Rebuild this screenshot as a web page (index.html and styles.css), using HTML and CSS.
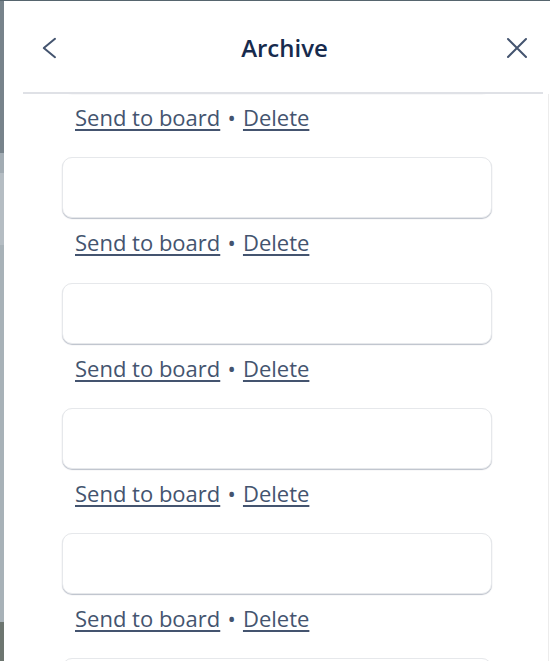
FILE: index.html
```html
<!DOCTYPE html>
<html lang="en">
<head>
<meta charset="utf-8">
<title>Archive</title>
<link rel="stylesheet" href="styles.css">
</head>
<body>
<div class="backdrop"></div>
<div class="panel">
  <header class="header">
    <button class="icon-btn back" aria-label="Back">
      <svg width="16" height="22" viewBox="0 0 16 22" fill="none" stroke="currentColor" stroke-width="2" stroke-linecap="round" stroke-linejoin="round"><path d="M14 1.8 L2.8 11 L14 20.2"/></svg>
    </button>
    <h2 class="title">Archive</h2>
    <button class="icon-btn close" aria-label="Close">
      <svg width="22" height="22" viewBox="0 0 22 22" fill="none" stroke="currentColor" stroke-width="2" stroke-linecap="round"><path d="M2 2 L20 20 M20 2 L2 20"/></svg>
    </button>
  </header>
  <div class="scroller">
    <ul class="list">
      <li class="item">
        <div class="card"></div>
        <div class="actions"><a href="#">Send to board</a><span class="sep"> • </span><a href="#">Delete</a></div>
      </li>
      <li class="item">
        <div class="card"></div>
        <div class="actions"><a href="#">Send to board</a><span class="sep"> • </span><a href="#">Delete</a></div>
      </li>
      <li class="item">
        <div class="card"></div>
        <div class="actions"><a href="#">Send to board</a><span class="sep"> • </span><a href="#">Delete</a></div>
      </li>
      <li class="item">
        <div class="card"></div>
        <div class="actions"><a href="#">Send to board</a><span class="sep"> • </span><a href="#">Delete</a></div>
      </li>
      <li class="item">
        <div class="card"></div>
        <div class="actions"><a href="#">Send to board</a><span class="sep"> • </span><a href="#">Delete</a></div>
      </li>
      <li class="item">
        <div class="card"></div>
      </li>
    </ul>
  </div>
</div>
</body>
</html>
```
FILE: styles.css
```css
html, body {
  margin: 0;
  padding: 0;
  height: 661px;
  overflow: hidden;
}

body {
  display: flex;
  background: #56656e;
  font-family: "Open Sans", "Noto Sans", sans-serif;
}

.backdrop {
  width: 4px;
  flex: none;
  background: linear-gradient(to bottom,
    #56656e 0 1px,
    #77838b 1px 153px,
    #a2acb3 153px 173px,
    #b5bdc3 173px 245px,
    #a8b2b8 245px 622px,
    #6d7670 622px 661px);
}

.panel {
  flex: 1;
  margin-top: 1px;
  background: #ffffff;
  display: flex;
  flex-direction: column;
  min-width: 0;
}

.header {
  flex: none;
  box-sizing: border-box;
  margin: 0 7px 0 19px;
  height: 93px;
  padding: 2px 15px 0 18px;
  border-bottom: 2px solid #dfe1e6;
  display: grid;
  grid-template-columns: 1fr auto 1fr;
  align-items: center;
}

.icon-btn {
  border: 0;
  padding: 0;
  margin: 0;
  background: none;
  color: #44546f;
  display: flex;
  cursor: pointer;
}

.back { justify-self: start; }
.close { justify-self: end; }

.title {
  margin: 0;
  font-size: 24px;
  font-weight: 600;
  color: #172b4d;
  line-height: 32px;
}

.scroller {
  flex: 1;
  overflow: hidden;
  margin-right: 1px;
  border-right: 1px solid #ececec;
}

.list {
  list-style: none;
  margin: -62px 0 0 0;
  padding: 0 0 0 58px;
}

.item {
  width: 430px;
}

.card {
  box-sizing: border-box;
  height: 61px;
  border-radius: 10px;
  background: #ffffff;
  border: 1px solid #e6e8eb;
  box-shadow: 0 1px 1px rgba(9, 30, 66, 0.28);
}

.actions {
  padding: 12px 0 28px 13px;
  line-height: 24px;
  font-size: 22px;
  color: #44546f;
  white-space: nowrap;
}

.item:nth-child(2) .actions {
  padding-bottom: 29px;
}

.sep {
  margin: 0 1.5px;
}

.actions a {
  color: #44546f;
  text-decoration: underline;
  text-decoration-thickness: 2px;
  text-underline-offset: 3px;
}
```
